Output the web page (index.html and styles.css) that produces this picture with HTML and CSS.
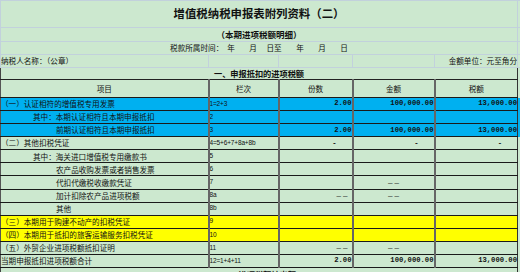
FILE: index.html
```html
<!DOCTYPE html>
<html lang="zh-CN">
<head>
<meta charset="utf-8">
<title>增值税纳税申报表附列资料（二）</title>
<link rel="stylesheet" href="styles.css">
</head>
<body>
<table class="sheet">
<colgroup>
<col class="w-item"><col class="w-no"><col class="w-cnt"><col class="w-amt"><col class="w-tax"><col class="w-edge">
</colgroup>
<tbody>
<tr class="r-title"><td colspan="5" class="lt title">增值税纳税申报表附列资料（二）</td><td class="lt"></td></tr>
<tr class="r-sub"><td colspan="5" class="lt subtitle">（本期进项税额明细）</td><td class="lt"></td></tr>
<tr class="r-date"><td colspan="5" class="lt period"><span>税款所属时间：</span><span class="g1">年</span><span class="g2">月</span><span class="g3">日至</span><span class="g2">年</span><span class="g2">月</span><span class="g2">日</span></td><td class="lt"></td></tr>
<tr class="r-payer"><td class="lt payer">纳税人名称：（公章）</td><td class="lt"></td><td class="lt"></td><td class="lt"></td><td class="lt unit">金额单位：元至角分</td><td class="lt"></td></tr>
<tr class="r-sec"><td colspan="5" class="sec">一、申报抵扣的进项税额</td><td></td></tr>
<tr class="r-head"><td class="hd first">项目</td><td class="hd">栏次</td><td class="hd">份数</td><td class="hd">金额</td><td class="hd last">税额</td><td></td></tr>

<tr class="row blue"><td class="item">（一）认证相符的增值税专用发票</td><td class="no">1=2+3</td><td class="num">2.00</td><td class="num">100,000.00</td><td class="num last">13,000.00</td><td class="edge"></td></tr>
<tr class="row blue"><td class="item i1">其中：本期认证相符且本期申报抵扣</td><td class="no">2</td><td class="num"></td><td class="num"></td><td class="num last"></td><td class="edge"></td></tr>
<tr class="row blue"><td class="item i2">前期认证相符且本期申报抵扣</td><td class="no">3</td><td class="num">2.00</td><td class="num">100,000.00</td><td class="num last">13,000.00</td><td class="edge"></td></tr>
<tr class="row"><td class="item">（二）其他扣税凭证</td><td class="no">4=5+6+7+8a+8b</td><td class="num dash">-</td><td class="num dash">-</td><td class="num dash last">-</td><td class="edge"></td></tr>
<tr class="row"><td class="item i1">其中：海关进口增值税专用缴款书</td><td class="no">5</td><td class="num"></td><td class="num"></td><td class="num last"></td><td class="edge"></td></tr>
<tr class="row"><td class="item i2">农产品收购发票或者销售发票</td><td class="no">6</td><td class="num"></td><td class="num"></td><td class="num last"></td><td class="edge"></td></tr>
<tr class="row"><td class="item i2">代扣代缴税收缴款凭证</td><td class="no">7</td><td class="num"></td><td class="num ctr">– –</td><td class="num last"></td><td class="edge"></td></tr>
<tr class="row"><td class="item i2">加计扣除农产品进项税额</td><td class="no">8a</td><td class="num dd">– –</td><td class="num ctr">– –</td><td class="num last"></td><td class="edge"></td></tr>
<tr class="row"><td class="item i2">其他</td><td class="no">8b</td><td class="num"></td><td class="num"></td><td class="num last"></td><td class="edge"></td></tr>
<tr class="row yellow"><td class="item">（三）本期用于购建不动产的扣税凭证</td><td class="no">9</td><td class="num"></td><td class="num"></td><td class="num last"></td><td class="edge"></td></tr>
<tr class="row yellow"><td class="item">（四）本期用于抵扣的旅客运输服务扣税凭证</td><td class="no">10</td><td class="num"></td><td class="num"></td><td class="num last"></td><td class="edge"></td></tr>
<tr class="row"><td class="item">（五）外贸企业进项税额抵扣证明</td><td class="no">11</td><td class="num dd">– –</td><td class="num ctr">– –</td><td class="num last"></td><td class="edge"></td></tr>
<tr class="row"><td class="item">当期申报抵扣进项税额合计</td><td class="no">12=1+4+11</td><td class="num">2.00</td><td class="num">100,000.00</td><td class="num last">13,000.00</td><td class="edge"></td></tr>
<tr class="row"><td colspan="5" class="sec sec2">二、进项税额转出额</td><td class="edge"></td></tr>
</tbody>
</table>
</body>
</html>
```

FILE: styles.css
```css
html, body {
  margin: 0;
  padding: 0;
}

body {
  width: 520px;
  height: 272px;
  overflow: hidden;
  background: #cce8cf;
  color: #111;
  font-family: "Noto Sans CJK SC", "Noto Sans", sans-serif;
  font-size: 7.6px;
}

.sheet {
  border-collapse: collapse;
  table-layout: fixed;
  width: 520px;
  border-top: 1px solid #c2d1dc;
  border-left: 1px solid #c2d1dc;
}

.w-item { width: 208px; }
.w-no { width: 70px; }
.w-cnt { width: 74px; }
.w-amt { width: 82px; }
.w-tax { width: 83px; }
.w-edge { width: 3px; }

.sheet td {
  padding: 0;
  white-space: nowrap;
  overflow: hidden;
  line-height: 1;
  vertical-align: middle;
}

.sheet td.lt {
  border-right: 1px solid #c2d1dc;
  border-bottom: 1px solid #c2d1dc;
}

.r-title { height: 27px; }
.r-sub { height: 14px; }
.r-date { height: 13px; }
.r-payer { height: 13px; }
.r-sec { height: 12px; }
.r-head { height: 18px; }
.row { height: 13.08px; }

.title {
  text-align: center;
  font-size: 11.4px;
  font-weight: 700;
  padding-right: 3px;
}

.subtitle {
  text-align: center;
  font-size: 8.5px;
  font-weight: 700;
  padding-left: 3px;
}

.period {
  text-align: center;
  padding-right: 5px;
}

.period .g1 { margin-left: 4px; }
.period .g2 { margin-left: 14.5px; }
.period .g3 { margin-left: 9.5px; }

.r-payer td {
  border-bottom: 1px solid #222;
}

.payer {
  padding-left: 2px;
}

.unit {
  text-align: right;
  padding-right: 3px;
}

.sec {
  text-align: center;
  font-weight: 700;
  font-size: 8.2px;
  border-bottom: 1px solid #222;
  border-left: 1px solid #444;
  border-right: 1px solid #333;
}

.sec2 {
  vertical-align: top;
  padding-top: 2px;
}

.hd {
  text-align: center;
  border-left: 2px solid #666;
  border-bottom: 1px solid #1a1a1a;
}

.hd.first,
.item {
  border-left: 1px solid #555;
}

.hd.last,
.num.last {
  border-right: 1px solid #333;
}

.item {
  padding-left: 2px;
  border-bottom: 1px solid #1a1a1a;
}

.item.i1 { padding-left: 32px; }
.item.i2 { padding-left: 55px; }

.no {
  padding-left: 2px;
  font-family: "Liberation Sans", sans-serif;
  font-size: 6.5px;
  letter-spacing: -0.15px;
  border-left: 2px solid #666;
  border-bottom: 1px solid #1a1a1a;
}

.num {
  text-align: right;
  padding-right: 5px;
  font-family: "Liberation Mono", monospace;
  font-weight: 700;
  font-size: 7.2px;
  border-left: 2px solid #666;
  border-bottom: 1px solid #1a1a1a;
}

.num.dash {
  padding-right: 15px;
}

.num.dd {
  font-family: "Liberation Sans", sans-serif;
  font-weight: 400;
  font-size: 8px;
  padding-right: 4px;
}

.num.ctr {
  text-align: center;
  padding-right: 0;
  font-family: "Liberation Sans", sans-serif;
  font-weight: 400;
  font-size: 8px;
}

.blue td { background: #00b0f0; }
.yellow td { background: #ffff00; }
.yellow td.edge { background: transparent; }
```
